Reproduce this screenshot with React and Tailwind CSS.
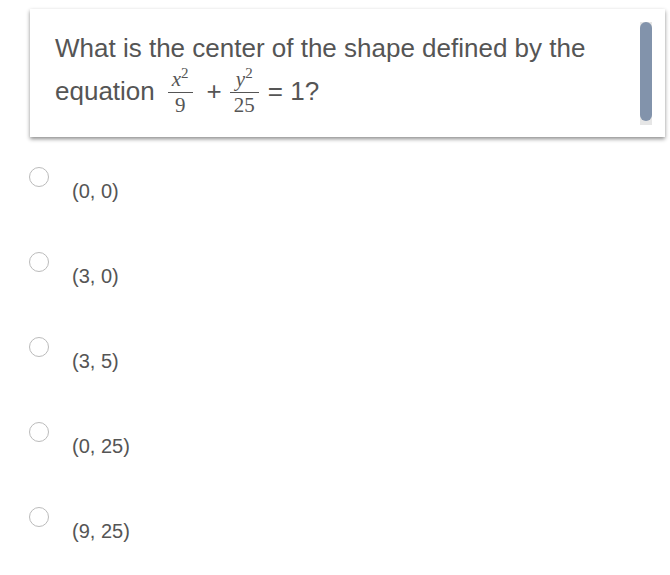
import React from 'react'

const options = ['(0, 0)', '(3, 0)', '(3, 5)', '(0, 25)', '(9, 25)']

function Frac({ num, sup, den }) {
  return (
    <span className="inline-flex flex-col items-stretch relative top-[1px] font-['Liberation_Serif',serif] text-[21px] leading-none text-[#555]">
      <span className="px-[4px] pb-[2px] flex items-start justify-center">
        <i>{num}</i>
        <span className="text-[15px] leading-none -mt-[3px]">{sup}</span>
      </span>
      <span className="block h-[1px] bg-[#555]" />
      <span className="px-[4px] pt-[2px] text-center">{den}</span>
    </span>
  )
}

export default function App() {
  return (
    <div className="bg-white min-h-[575px] w-[670px] font-['Liberation_Sans',Arial,sans-serif] text-[#555]">
      <div className="pt-[9px] pl-[30px]">
        <div className="relative w-[635px] h-[128px] bg-white shadow-[0_2px_4px_rgba(0,0,0,0.45)] pl-[25px] pt-[21px]">
          <p className="text-[26px] leading-[36px]">What is the center of the shape defined by the</p>
          <div className="flex items-center h-[50px] text-[26px] leading-[36px]">
            <span>equation</span>
            <span className="ml-[13px] flex"><Frac num="x" sup="2" den="9" /></span>
            <span className="ml-[14px]">+</span>
            <span className="ml-[8px] flex"><Frac num="y" sup="2" den="25" /></span>
            <span className="ml-[9px]">= 1?</span>
          </div>
          <div className="absolute left-[610px] top-[13px] w-[12px] h-[103px] bg-[#e6e6e6]">
            <div className="w-[12px] h-[99px] rounded-full bg-[#8293ab]" />
          </div>
        </div>
      </div>
      <div className="pl-[29px] pt-[30px] flex flex-col gap-[51px]">
        {options.map(o => (
          <div key={o} className="flex items-start">
            <span className="w-[20px] h-[20px] rounded-full border border-[#bbb] bg-white shrink-0" />
            <span className="ml-[23px] mt-[14px] text-[20px] leading-[20px]">{o}</span>
          </div>
        ))}
      </div>
    </div>
  )
}
